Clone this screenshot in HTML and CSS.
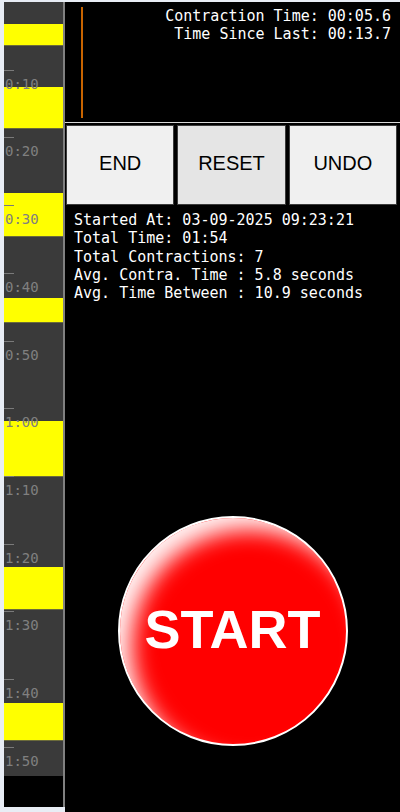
FILE: index.html
```html
<!DOCTYPE html>
<html>
<head>
<meta charset="utf-8">
<link rel="stylesheet" href="styles.css">
</head>
<body>
<div class="app">
  <aside class="timeline-col">
    <div class="track">
      <div class="block" style="top:22px;height:22px"></div>
      <div class="block" style="top:85px;height:42px"></div>
      <div class="block" style="top:191px;height:44px"></div>
      <div class="block" style="top:296px;height:25px"></div>
      <div class="block" style="top:419px;height:56px"></div>
      <div class="block" style="top:565px;height:43px"></div>
      <div class="block" style="top:701px;height:38px"></div>

      <div class="tick" style="top:67.7px"><span class="label">0:10</span></div>
      <div class="tick" style="top:135.4px"><span class="label">0:20</span></div>
      <div class="tick" style="top:203.1px"><span class="label">0:30</span></div>
      <div class="tick" style="top:270.8px"><span class="label">0:40</span></div>
      <div class="tick" style="top:338.5px"><span class="label">0:50</span></div>
      <div class="tick" style="top:406.2px"><span class="label">1:00</span></div>
      <div class="tick" style="top:473.9px"><span class="label">1:10</span></div>
      <div class="tick" style="top:541.6px"><span class="label">1:20</span></div>
      <div class="tick" style="top:609.3px"><span class="label">1:30</span></div>
      <div class="tick" style="top:677px"><span class="label">1:40</span></div>
      <div class="tick" style="top:744.7px"><span class="label">1:50</span></div>
    </div>
  </aside>
  <main class="main">
    <header class="top">
      <div class="cursor"></div>
      <div class="timers">
        <div>Contraction Time: 00:05.6</div>
        <div>Time Since Last: 00:13.7</div>
      </div>
    </header>
    <div class="controls">
      <button class="btn">END</button>
      <button class="btn btn-active">RESET</button>
      <button class="btn">UNDO</button>
    </div>
    <section class="stats">
      <div>Started At: 03-09-2025 09:23:21</div>
      <div>Total Time: 01:54</div>
      <div>Total Contractions: 7</div>
      <div>Avg. Contra. Time : 5.8 seconds</div>
      <div>Avg. Time Between : 10.9 seconds</div>
    </section>
    <div class="start-wrap">
      <button class="start">START</button>
    </div>
  </main>
</div>
</body>
</html>
```
FILE: styles.css
```css
html, body {
  margin: 0;
  padding: 0;
}
body {
  background: #e8edf5;
  width: 400px;
  height: 812px;
  overflow: hidden;
}
.app {
  display: flex;
  margin-left: 4px;
  padding-top: 2px;
  height: 810px;
}
.timeline-col {
  width: 59px;
  height: 805px;
  background: #000;
  border-right: 2px solid #808080;
  flex: none;
}
.track {
  position: relative;
  height: 774px;
  background: #3a3a3a;
  overflow: hidden;
}
.block {
  position: absolute;
  left: 0;
  right: 0;
  background: #ffff00;
  box-shadow: inset 0 -1px 0 #6b6b3a;
}
.tick {
  position: absolute;
  left: 0;
  width: 10px;
  height: 1px;
  background: #7a7a7a;
}
.label {
  position: absolute;
  left: 1px;
  top: 6px;
  font-family: "DejaVu Sans Mono", monospace;
  font-size: 14px;
  line-height: 16px;
  color: #808080;
  white-space: nowrap;
}
.main {
  flex: 1;
  background: #000;
  display: flex;
  flex-direction: column;
  height: 810px;
}
.top {
  display: flex;
  justify-content: space-between;
  height: 121px;
  border-bottom: 1px solid #d8d8d8;
  box-sizing: border-box;
  padding: 5px 9px 0 16px;
}
.cursor {
  width: 2px;
  height: 111px;
  background: #c86400;
}
.timers {
  font-family: "DejaVu Sans Mono", monospace;
  font-size: 15px;
  line-height: 18.3px;
  color: #fff;
  text-align: right;
}
.controls {
  display: grid;
  grid-template-columns: repeat(3, 1fr);
  gap: 3px;
  padding: 0 3px 0 1px;
  margin-top: 2px;
  height: 80px;
}
.btn {
  background: #f0f0f0;
  border: 1px solid #3c3c3c;
  font-family: "Liberation Sans", Arial, sans-serif;
  font-size: 20px;
  color: #000;
  padding: 0 0 4px 0;
  margin: 0;
}
.btn-active {
  background: #e5e5e5;
}
.stats {
  font-family: "DejaVu Sans Mono", monospace;
  font-size: 15px;
  line-height: 18.3px;
  color: #fff;
  padding: 6px 0 0 9px;
}
.start-wrap {
  display: flex;
  justify-content: center;
  padding-top: 214px;
}
.start {
  width: 230px;
  height: 230px;
  border-radius: 50%;
  border: 2px solid #fff;
  background: #ff0000;
  box-shadow: inset 16px 16px 22px -4px rgba(255, 255, 255, 0.95);
  color: #fff;
  font-family: "Liberation Sans", Arial, sans-serif;
  font-weight: bold;
  font-size: 54px;
  padding: 0 0 4px 0;
  margin: 0;
}
```
